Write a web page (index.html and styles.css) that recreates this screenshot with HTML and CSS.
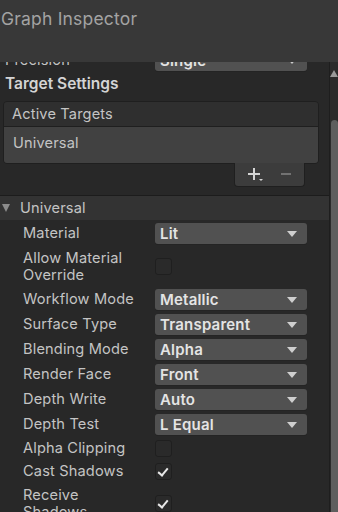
FILE: index.html
```html
<!DOCTYPE html>
<html lang="en">
<head>
  <meta charset="UTF-8" />
  <title>Graph Inspector</title>
  <link rel="stylesheet" href="styles.css">
</head>
<body>

  <!-- Title -->
  <div class="titlebar">Graph Inspector</div>

  <div class="panel">
    <div class="scroll">
      <div class="scroll-inner">

        <div class="prop top-row">
          <span class="label">Precision</span>
          <div class="dropdown">Single</div>
        </div>

        <div class="section-title">Target Settings</div>

        <!-- Active targets list -->
        <div class="list">
          <div class="list-header">Active Targets</div>
          <div class="list-item">Universal</div>
        </div>
        <div class="list-footer">
          <div class="list-buttons">
            <svg width="16" height="14" viewBox="0 0 16 14">
              <path d="M6 0v12M0 6h12" stroke="#d4d4d4" stroke-width="2" fill="none"/>
              <path d="M11 11h4l-2 2z" fill="#d4d4d4"/>
            </svg>
            <svg width="12" height="14" viewBox="0 0 12 14">
              <path d="M1 6h10" stroke="#727272" stroke-width="2" fill="none"/>
            </svg>
          </div>
        </div>

        <!-- Universal foldout -->
        <div class="foldout">
          <span class="foldout-arrow"></span>
          Universal
        </div>

        <div class="props">
          <div class="prop">
            <span class="label">Material</span>
            <div class="dropdown">Lit</div>
          </div>
          <div class="prop tall">
            <span class="label">Allow Material<br>Override</span>
            <div class="checkbox"></div>
          </div>
          <div class="prop">
            <span class="label">Workflow Mode</span>
            <div class="dropdown">Metallic</div>
          </div>
          <div class="prop">
            <span class="label">Surface Type</span>
            <div class="dropdown">Transparent</div>
          </div>
          <div class="prop">
            <span class="label">Blending Mode</span>
            <div class="dropdown">Alpha</div>
          </div>
          <div class="prop">
            <span class="label">Render Face</span>
            <div class="dropdown">Front</div>
          </div>
          <div class="prop">
            <span class="label">Depth Write</span>
            <div class="dropdown">Auto</div>
          </div>
          <div class="prop">
            <span class="label">Depth Test</span>
            <div class="dropdown">L Equal</div>
          </div>
          <div class="prop check-row">
            <span class="label">Alpha Clipping</span>
            <div class="checkbox"></div>
          </div>
          <div class="prop check-row">
            <span class="label">Cast Shadows</span>
            <div class="checkbox checked"></div>
          </div>
          <div class="prop tall">
            <span class="label">Receive<br>Shadows</span>
            <div class="checkbox checked"></div>
          </div>
        </div>

      </div>
    </div>

    <!-- Scrollbar -->
    <div class="scrollbar">
      <div class="scroll-up"></div>
      <div class="thumb"></div>
    </div>
  </div>

</body>
</html>
```

FILE: styles.css
```css
body {
  margin: 0;
  width: 338px;
  height: 512px;
  overflow: hidden;
  background-color: #282828;
  font-family: Inter, "Noto Sans", sans-serif;
  display: flex;
  flex-direction: column;
}

.titlebar {
  height: 62px;
  flex: none;
  background-color: #383838;
  color: #a3a3a3;
  font-size: 17.5px;
  letter-spacing: 0.2px;
  line-height: 38px;
  padding-left: 1px;
  position: relative;
  z-index: 2;
}

.panel {
  flex: 1;
  display: flex;
  min-height: 0;
}

.scroll {
  flex: 1;
  overflow: hidden;
  background-color: #282828;
}

.scroll-inner {
  margin-top: -14px;
}

/* property rows */
.prop {
  display: flex;
  align-items: center;
  height: 25px;
  padding-left: 23px;
  padding-right: 22px;
}

.top-row {
  padding-left: 5px;
}

.top-row .label {
  width: 150px;
}

.label {
  width: 132px;
  flex: none;
  color: #c4c4c4;
  font-size: 14.6px;
  letter-spacing: 0.15px;
  line-height: 17px;
}

.dropdown {
  flex: 1;
  height: 21px;
  line-height: 22px;
  box-sizing: border-box;
  background-color: #515151;
  border-radius: 3px;
  box-shadow: 0 1px 0 #242424;
  color: #e4e4e4;
  font-size: 15px;
  font-weight: 600;
  letter-spacing: 0.2px;
  padding-left: 5px;
  position: relative;
}

.dropdown::after {
  content: "";
  position: absolute;
  right: 10px;
  top: 8px;
  border-left: 5px solid transparent;
  border-right: 5px solid transparent;
  border-top: 6px solid #cfcfcf;
}

.section-title {
  color: #d4d4d4;
  font-size: 15.5px;
  font-weight: 600;
  height: 27px;
  line-height: 20px;
  padding-left: 5px;
  padding-top: 1px;
}

/* list */
.list {
  margin-left: 3px;
  width: 316px;
  border: 1px solid #1f1f1f;
  border-radius: 4px;
  overflow: hidden;
  box-sizing: border-box;
}

.list-header {
  height: 24px;
  line-height: 24px;
  padding-left: 8px;
  background-color: #2f2f2f;
  border-bottom: 1px solid #1f1f1f;
  color: #c4c4c4;
  font-size: 14.6px;
  letter-spacing: 0.15px;
}

.list-item {
  height: 36px;
  line-height: 33px;
  padding-left: 9px;
  background-color: #414141;
  color: #c4c4c4;
  font-size: 14.6px;
  letter-spacing: 0.15px;
}

.list-footer {
  display: flex;
  justify-content: flex-end;
  padding-right: 24px;
  height: 31px;
}

.list-buttons {
  width: 71px;
  height: 24px;
  margin-top: -1px;
  box-sizing: border-box;
  background-color: #3c3c3c;
  border: 1px solid #1f1f1f;
  border-top: none;
  border-radius: 0 0 4px 4px;
  display: flex;
  align-items: center;
  gap: 16px;
  padding-left: 13px;
}

/* foldout */
.foldout {
  height: 24px;
  line-height: 24px;
  background-color: #333333;
  border-top: 1px solid #1c1c1c;
  color: #c4c4c4;
  font-size: 14.6px;
  letter-spacing: 0.15px;
  padding-left: 20px;
  position: relative;
}

.foldout-arrow {
  position: absolute;
  left: 2px;
  top: 8px;
  border-left: 4px solid transparent;
  border-right: 4px solid transparent;
  border-top: 8px solid #8c8c8c;
}

.props {
  padding-top: 1px;
}

.prop.tall {
  height: 41px;
}

.prop.check-row {
  height: 23px;
}

.checkbox {
  width: 17px;
  height: 17px;
  box-sizing: border-box;
  background-color: #2a2a2a;
  border: 1px solid #1f1f1f;
  border-radius: 3px;
  position: relative;
}

.checkbox.checked::after {
  content: "";
  position: absolute;
  left: 4px;
  top: 2px;
  width: 4px;
  height: 8px;
  border-right: 2px solid #e8e8e8;
  border-bottom: 2px solid #e8e8e8;
  transform: rotate(40deg);
}

/* scrollbar */
.scrollbar {
  width: 8px;
  flex: none;
  background-color: #2b2b2b;
  border-left: 1px solid #1e1e1e;
  display: flex;
  flex-direction: column;
  align-items: center;
}

.scroll-up {
  margin-top: 8px;
  border-left: 4px solid transparent;
  border-right: 4px solid transparent;
  border-bottom: 7px solid #999999;
}

.thumb {
  margin-top: 43px;
  width: 7px;
  flex: 1;
  margin-left: 1px;
  background-color: #5e5e5e;
  border-radius: 4px 4px 0 0;
}
```
